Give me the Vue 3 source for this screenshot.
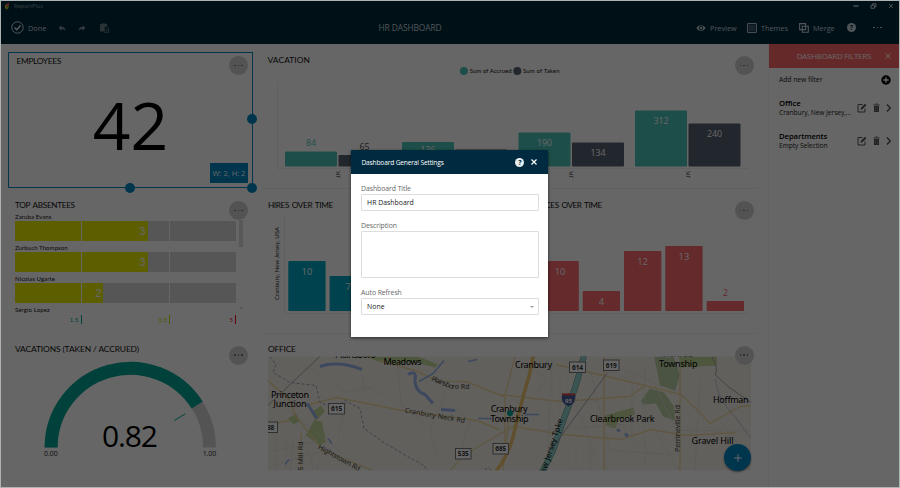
<script setup>
const accrued = [
  { x: 285, y: 151.5, v: 84, ly: 146, out: true },
  { x: 402, y: 142, v: 136, ly: 153 },
  { x: 518.5, y: 132.5, v: 190, ly: 145.5 },
  { x: 635, y: 110.5, v: 312, ly: 124 },
]
const taken = [
  { x: 338.5, y: 155, v: 65, ly: 149.5, out: true },
  { x: 455, y: 149.5, v: '', ly: 160 },
  { x: 572, y: 142.5, v: 134, ly: 156 },
  { x: 688.5, y: 123.5, v: 240, ly: 136.5 },
]
const hires = [
  { x: 288.3, y: 261, v: 10, ly: 275 },
  { x: 329.6, y: 276, v: 7, ly: 290 },
]
const absences = [
  { x: 541.5, y: 261, v: 10, ly: 275 },
  { x: 582.7, y: 291, v: 4, ly: 305 },
  { x: 624, y: 251, v: 12, ly: 265 },
  { x: 665.3, y: 246, v: 13, ly: 260 },
  { x: 706.7, y: 301, v: 2, ly: 295.5, out: true },
]
const people = [
  { name: 'Zaruba Evans', v: 3, w: 60 },
  { name: 'Zurbuch Thompson', v: 3, w: 60 },
  { name: 'Nicolas Ugarte', v: 2, w: 40 },
]
const filters = [
  { name: 'Office', value: 'Cranbury, New Jersey,...' },
  { name: 'Departments', value: 'Empty Selection' },
]
const shields = [
  { x: 328.6, y: 403, w: 16, t: '615' },
  { x: 260, y: 421.5, w: 17.5, t: '638' },
  { x: 455.5, y: 448, w: 15.5, t: '535' },
  { x: 493, y: 443, w: 15.5, t: '685' },
  { x: 569.5, y: 361.5, w: 16, t: '614' },
  { x: 603.5, y: 359.5, w: 15.5, t: '619' },
]
</script>

<template>
  <div class="app">
    <header class="header">
      <div class="titlebar">
        <svg class="logo" viewBox="0 0 8 9"><path d="M1 4 3 2 3.4 8.4 1.3 7z" fill="#ffb52e" /><path d="M3.1 2 6 .5 5.4 4.5 3.2 5z" fill="#ef5350" /><path d="M3.4 5 5.7 4.6 4.8 8 3 8.6z" fill="#75c044" /></svg>
        <span class="product">ReportPlus</span>
        <svg class="window-controls" viewBox="0 0 44 8" fill="none" stroke="#d5e0e4" stroke-width=".9"><path d="M2.500 4h5" stroke-width="1.300" /><path d="M20 3.300h3.500v3h-3.500zM21.500 3.300v-1.500h3.500v3h-1.500M38 2l3.800 4M41.800 2 38 6" /></svg>
      </div>
      <div class="toolbar">
        <div class="tools">
          <svg class="check" viewBox="0 0 13 13" fill="none" stroke="#e6eef1"><circle cx="6.5" cy="6.500" r="5.700" stroke-width=".9" /><path d="m3.600 6.500 2.100 2.200 3.800-4.200" stroke-width="1.300" /></svg>
          <span class="done">Done</span>
          <svg class="undo" viewBox="0 0 9 8"><path d="M4 .8v2c3 0 4.200 1.500 4.400 4.500C7.300 5.500 6 5 4 5v2L.6 3.900z" fill="#7f949e" /></svg>
          <svg class="redo" viewBox="0 0 9 8"><path d="M5 .8v2C2 2.800.8 4.300.6 7.300 1.700 5.500 3 5 5 5v2l3.400-3.100z" fill="#7f949e" /></svg>
          <svg class="paste" viewBox="0 0 9 10"><path d="M0 1h2l.6-.8h2L5.200 1h2v2H4v5.500H0z" fill="#6a7f89" /><path d="M4.300 3.500h2.500l1.700 1.800v4H4.300z" fill="none" stroke="#6a7f89" stroke-width=".9" /><path d="M5.500 6h2M5.500 7.500h2" stroke="#6a7f89" stroke-width=".7" /></svg>
        </div>
        <div class="heading">HR DASHBOARD</div>
        <div class="actions">
          <svg class="eye" viewBox="0 0 10 8"><path d="M.5 4C2.700.2 7.300.2 9.500 4 7.300 7.800 2.700 7.800.5 4z" fill="#c6d2d7" /><circle cx="5" cy="4" r="2.200" fill="#00293b" /><circle cx="5" cy="4" r="1.200" fill="#c6d2d7" /></svg>
          <span class="preview">Preview</span>
          <svg class="grid-icon" viewBox="0 0 10 10" fill="none" stroke="#c6d2d7"><path d="M.6.6h8.800v8.800H.6z" /><path d="M2.300 3h5.500M2.300 5h5.500M2.300 7h5.500" stroke-dasharray="1.200 .9" stroke-width="1.200" /></svg>
          <span class="themes">Themes</span>
          <svg class="merge-icon" viewBox="0 0 10 10" fill="none" stroke="#c6d2d7"><path d="M.6.6h6v6h-6zM3.300 3.300h6v6h-6z" stroke-width="1.100" /></svg>
          <span class="merge">Merge</span>
          <span class="help">?</span>
          <span class="ellipsis"><i /><i /><i /></span>
        </div>
      </div>
    </header>

    <div class="body">
      <main class="board">
        <section class="card selected">
          <div class="card-head"><h2>EMPLOYEES</h2><span class="more"><i /><i /><i /></span></div>
          <div class="big">42</div>
          <span class="size">W: 2, H: 2</span>
          <b class="handle right" /><b class="handle bottom" /><b class="handle corner" />
        </section>

        <section class="card wide">
          <div class="card-head"><h2 class="t-vac">VACATION</h2><span class="more"><i /><i /><i /></span></div>
          <svg class="plot" viewBox="262 79 494 109">
            <circle cx="463.900" cy="71" r="4" fill="#4cc3b7" /><text x="469.700" y="73.300" class="legend" textLength="42">Sum of Accrued</text>
            <circle cx="517.300" cy="71" r="4" fill="#566070" /><text x="523" y="73.300" class="legend" textLength="36.500">Sum of Taken</text>
            <path d="M277.500 83v85.500H748M262 188.500h496" class="axis" />
            <g v-for="b in accrued" :key="'a' + b.x">
              <rect :x="b.x" :y="b.y" width="52" :height="166.5 - b.y" rx="1" fill="#4cc3b7" />
              <text :x="b.x + 26" :y="b.ly" class="num" :class="{ teal: b.out }">{{ b.v }}</text>
              <text :transform="`translate(${b.x + 54.8} 178) rotate(-90)`" class="tick" textLength="7">JK</text>
            </g>
            <g v-for="b in taken" :key="'t' + b.x">
              <rect :x="b.x" :y="b.y" width="52" :height="166.5 - b.y" rx="1" fill="#566070" />
              <text :x="b.x + 26" :y="b.ly" class="num" :class="{ slate: b.out }">{{ b.v }}</text>
            </g>
          </svg>
        </section>

        <section class="card">
          <div class="card-head"><h2 class="t-top">TOP ABSENTEES</h2><span class="more"><i /><i /><i /></span></div>
          <div class="absentees">
            <div class="people">
              <div v-for="p in people" :key="p.name" class="person">
                <span class="name">{{ p.name }}</span>
                <div class="track"><div class="fill" :style="{ width: p.w + '%' }">{{ p.v }}</div></div>
              </div>
              <span class="name last">Sergio Lopez</span>
              <div class="scale"><span class="s1">1.5</span><span class="s2">3.5</span><span class="s3">5</span></div>
            </div>
            <div class="scroll"><i /><em /></div>
          </div>
        </section>

        <section class="card">
          <div class="card-head"><h2 class="t-hires">HIRES OVER TIME</h2></div>
          <svg class="plot" viewBox="262 224 242 109">
            <path d="M284.500 214v99.500H504M262 333.500h242" class="axis" />
            <text transform="translate(279 300) rotate(-90)" class="region" textLength="73">Cranbury, New Jersey, USA</text>
            <g v-for="b in hires" :key="b.x">
              <rect :x="b.x" :y="b.y" width="37.300" :height="311 - b.y" rx="1" fill="#00a9c2" />
              <text :x="b.x + 18.6" :y="b.ly" class="num large">{{ b.v }}</text>
            </g>
          </svg>
        </section>

        <section class="card absence-card">
          <div class="card-head"><h2 class="t-abs">ABSENCES OVER TIME</h2><span class="more"><i /><i /><i /></span></div>
          <svg class="plot" viewBox="513 224 243 109">
            <path d="M540 313.500h208M513 333.500h244" class="axis" />
            <g v-for="b in absences" :key="b.x">
              <rect :x="b.x" :y="b.y" width="37.300" :height="311 - b.y" rx="1" fill="#fd6a6c" />
              <text :x="b.x + 18.6" :y="b.ly" class="num large" :class="{ red: b.out }">{{ b.v }}</text>
            </g>
          </svg>
        </section>

        <section class="card">
          <div class="card-head"><h2 class="t-gauge">VACATIONS (TAKEN / ACCRUED)</h2><span class="more"><i /><i /><i /></span></div>
          <svg class="plot" viewBox="8 368.500 245 109">
            <path d="M51.100 447a79.200 79.200 0 0 1 158.400 0" fill="none" stroke="#d3d3d3" stroke-width="13" />
            <path d="M51.100 447A79.200 79.200 0 0 1 197.200 404.600" fill="none" stroke="#00a693" stroke-width="13" />
            <path d="m174.300 420 11-6.700" stroke="#00a693" stroke-width="1" />
            <text x="102" y="446.500" class="ratio" textLength="56">0.82</text>
            <text x="44" y="455.500" class="limit" textLength="13.700">0.00</text>
            <text x="202.700" y="455.500" class="limit" textLength="13.500">1.00</text>
          </svg>
        </section>

        <section class="card wide">
          <div class="card-head"><h2 class="t-office">OFFICE</h2><span class="more"><i /><i /><i /></span></div>
          <svg class="plot" viewBox="262 368.500 494 109">
            <defs><clipPath id="map-area"><path d="M268 356h483v114H268z" /></clipPath></defs>
            <g clip-path="url(#map-area)">
              <path d="M268 356h483v114H268z" fill="#f2efe8" />
              <g fill="#c3d79a">
                <path d="m303 440 11-20 8 1 4 20-6 4-14-10zM288 418l8-5 4 7-6 4zM311 412l10-7 4 6-9 9zM364 356h54l20 8-3 3-19-5-28 2z" />
                <path d="M679 356h38v9l-37 2zM605 415l28-8 2 7-16 5-4 9-9-3z" />
              </g>
              <g fill="#bcd3a6"><path d="m654 356 20 1 6 18-5 15-15-5zM641 400l9-12 14 4 10 14 1 14-12-4-7-13-13 1z" /></g>
              <g class="minor">
                <path d="M268 452l50-12M270 466l60-18M276 430v40M286 438v32M294 436l-4 34M308 448l6 22M330 430l-14 40M346 402l-8 35M398 366l3 38 22 18M445 395l-15 34 8 30M470 420l-10 32M560 370v45M590 370l20 80M632 376v70M655 430l25 40M700 380l-5 90M720 420l30 40M612 365l40 15 20 40M608 370l25 10M612 450l60 4M625 430l35 30M645 365v100M552 360l-5 100M570 390l25 65M680 430h70M330 380l15 12 30-6M360 385l22 8M362 375l5 20" />
                <path d="M526 365l20 12-8 14M543 400h55M536 430l90-6M576 443v27M590 438v32M606 434v36M440 385l40 50M300 362l20 13M275 400l70 55" />
              </g>
              <g class="road">
                <path d="M268 380l22 20 5 15 28 35 50 20M290 420l-22 4M301 433v37M305 405l32-8 70 14 70 9 22 9M380 360l38 11 20 10h28l38 15" />
                <path d="M450 470q12-15 35-28l28-16 50 8 58 5 30-10 35 6 50-3M503 470l7-60M604 356v114M680 367v103M556 364l85 20 40 10 19 18 10 11 30-17 11-1M500 394l60 7 70-5 16-12M505 460v-65l10-39" />
              </g>
              <path d="M534 350q-3 22-10 43-7 26-11 44-6 20-17 34" class="avenue" />
              <path d="M585 350q-8 36-20 65l-12 35-11 22" fill="none" stroke="#5c8f8a" stroke-width="6" />
              <path d="M585 350q-8 36-20 65l-12 35-11 22" fill="none" stroke="#8fd3ca" stroke-width="5" />
              <path d="M326 350 268 405M607 373l-55 75M712 356q7 14 3 18l13 12 23 16" class="rail" />
              <path d="M715 378q3 22 20 38l16 22" fill="none" stroke="#b9bdd6" stroke-width=".8" />
              <path d="M270 356l6 8-3 8 17 10 26 3 4 17 15 6 10-8 15 8 4 20 20 14 20 12 20 11 10 14 26-4 12 3 16-11 12 10" class="border" />
              <g class="water">
                <path d="M320 366q18-6 42 3M408 374q9-5 7 5 0 12 10 15l8 9M441 409l14 1M307 403l10 15M617 429l3 2M625 433l3 3" />
                <path d="M419 381l14-8 11-13M328 438l4 5M285 464l4-5M478 418h14M468 361l9-2M525 414h14" class="stream" />
              </g>
              <g class="place">
                <text x="335" y="357" textLength="41">Plainsboro</text><text x="383.500" y="364.500" textLength="38">Meadows</text>
                <text><tspan x="271" y="397" textLength="38">Princeton</tspan><tspan x="273.500" y="406.500" textLength="33">Junction</tspan></text>
                <text x="515" y="367.500" textLength="37">Cranbury</text>
                <text><tspan x="490.700" y="411.500" textLength="37">Cranbury</tspan><tspan x="490.500" y="421.200" textLength="38">Township</tspan></text>
                <text x="590" y="421" textLength="64.500">Clearbrook Park</text>
                <text><tspan x="661" y="356.500" textLength="32">Monroe</tspan><tspan x="659" y="366" textLength="38.500">Township</tspan></text>
                <text x="713" y="402" textLength="35.500">Hoffman</text><text x="691.500" y="443.500" textLength="42">Gravel Hill</text>
              </g>
              <g class="street">
                <text transform="translate(431 380) rotate(22)" textLength="23">Plainsbo</text><text x="452" y="388.500" textLength="17.500">ro Rd</text>
                <text transform="translate(404.500 412) rotate(10)" textLength="61">Cranbury Neck Rd</text>
                <text transform="translate(317.500 448) rotate(29)" textLength="47">Hightstown Rd</text>
                <text transform="translate(302.500 470) rotate(-90)" textLength="29">S Mill Rd</text>
                <text transform="translate(680 451.500) rotate(-90)" textLength="47">Perrineville Rd</text>
              </g>
              <text transform="translate(543.500 479) rotate(-72)" class="pike" textLength="63">New Jersey Tpke</text>
              <g v-for="s in shields" :key="s.t">
                <rect :x="s.x" :y="s.y" :width="s.w" height="10.500" fill="#fff" stroke="#777" stroke-width="1" />
                <text :x="s.x + s.w / 2" :y="s.y + 7.7" class="route">{{ s.t }}</text>
              </g>
              <path d="M562 394h13q2 8-6.500 12-8.500-4-6.500-12z" fill="#465b9b" /><path d="M562 392.500q3 1 6.500 0 3.500 1 6.500 0v2.500h-13z" fill="#d94a4a" /><text x="568.500" y="402.500" class="interstate">95</text>
              <circle cx="510" cy="412.700" r="3" fill="#00a693" />
            </g>
          </svg>
        </section>
        <span class="add-widget"><svg viewBox="0 0 8 8"><path d="M4 .2v7.600M.2 4h7.600" stroke="#fff" stroke-width="1" /></svg></span>
      </main>

      <aside class="sidebar">
        <div class="side-head"><span>DASHBOARD FILTERS</span><svg viewBox="0 0 8 8"><path d="m1.500 1.500 5 5M6.500 1.500l-5 5" stroke="#fff" /></svg></div>
        <div class="add"><span>Add new filter</span><svg viewBox="0 0 10 10"><circle cx="5" cy="5" r="4.700" /><path d="M5 2.300v5.400M2.300 5h5.400" stroke="#fff" stroke-width="1.300" /></svg></div>
        <div v-for="f in filters" :key="f.name" class="filter">
          <div class="filter-text"><strong>{{ f.name }}</strong><span>{{ f.value }}</span></div>
          <svg class="filter-icons" viewBox="0 0 36 10" fill="none" stroke="#444">
            <path d="M5.500 1.500H1v7.500h7V5.500" stroke-width=".9" /><path d="m3.500 6.700.5-2L8 .8l1.400 1.400-4 4z" fill="#555" stroke="none" />
            <path d="M17 3h5v6h-5z" fill="#555" stroke="none" /><path d="M16.300 2h6.400M18.400 1h2.300" stroke-width=".8" /><path d="M18.600 3.800v4.400M20.500 3.800v4.400" stroke="#999" stroke-width=".6" />
            <path d="m30 1.500 3.300 3.500L30 8.500" stroke-width="1.200" />
          </svg>
        </div>
      </aside>
    </div>

    <div class="overlay">
      <div class="dialog">
        <div class="dialog-head">
          <span class="dialog-title">Dashboard General Settings</span>
          <span class="help-light">?</span>
          <svg class="close" viewBox="0 0 8 8"><path d="m1.500 1.500 5 5M6.500 1.500l-5 5" stroke="#fff" stroke-width="1.200" /></svg>
        </div>
        <div class="form">
          <label>Dashboard Title</label>
          <div class="field">HR Dashboard</div>
          <label>Description</label>
          <div class="field area" />
          <label>Auto Refresh</label>
          <div class="field select">None<i /></div>
        </div>
      </div>
    </div>
  </div>
</template>

<style>
body { margin: 0; overflow: hidden; }
</style>

<style scoped>
* { box-sizing: border-box; }
.app { position: relative; width: 900px; height: 488px; padding: 1px; display: flex; flex-direction: column; background: #aeb4b4; font-family: "Open Sans", "Noto Sans", sans-serif; color: #222; }
.header { height: 43px; background: #00293b; color: #c6d2d7; flex: none; }
.titlebar { height: 10px; display: flex; align-items: center; padding: 0 4px 0 3px; }
.logo { width: 7px; height: 8px; }
.product { font-size: 5.700px; margin-left: 3px; color: #8ea2ac; }
.window-controls { width: 44px; height: 8px; margin-left: auto; }
.toolbar { height: 33px; display: grid; grid-template-columns: 300px 1fr 300px; align-items: center; font-size: 7.300px; }
.tools, .actions { display: flex; align-items: center; }
.tools { padding-left: 10px; }
.check { width: 13px; height: 13px; }
.done { margin-left: 4px; width: 30px; }
.undo, .redo { width: 8px; height: 8px; }
.redo { margin-left: 12px; }
.paste { width: 9px; height: 10px; margin-left: 14px; }
.heading { text-align: center; font-size: 8.400px; letter-spacing: -.1px; padding-right: 80px; }
.actions { padding-left: 97px; }
.eye { width: 10px; height: 8px; }
.preview { width: 37px; margin-left: 4px; }
.grid-icon, .merge-icon { width: 10px; height: 10px; }
.themes { width: 38px; margin-left: 4px; }
.merge { width: 34px; margin-left: 4px; }
.help, .help-light { width: 9px; height: 9px; border-radius: 50%; background: #c6d2d7; color: #00293b; display: flex; align-items: center; justify-content: center; font-size: 7px; font-weight: 700; }
.ellipsis { display: flex; gap: 2px; margin-left: 17px; }
.ellipsis i { width: 1.500px; height: 1.500px; border-radius: 50%; background: #e0e8ea; }

.body { flex: 1; display: flex; min-height: 0; background: #fff; }
.board { position: relative; width: 768px; padding: 7px 12px 0 7px; display: grid; grid-template-columns: 245px 242px 243px; grid-template-rows: repeat(3, 137px); column-gap: 9px; row-gap: 7.800px; background: #fff; border-right: 1px dotted #eee; }
.card { position: relative; display: flex; flex-direction: column; min-width: 0; box-shadow: 0 0 1px #eee; }
.wide { grid-column: span 2; }
.card-head { height: 28px; flex: none; display: flex; justify-content: space-between; padding: 5px 5px 0 6px; }
.wide .card-head, .absence-card .card-head { padding-right: 2.500px; }
h2 { margin: -1px 0 0; font: 400 8.400px/10px Lato, sans-serif; color: #111; white-space: nowrap; letter-spacing: .1px; }
.t-top { margin-left: 1px; font-size: 8.200px; letter-spacing: -.32px; word-spacing: 1.200px; }
.t-hires { font-size: 8.200px; letter-spacing: -.38px; word-spacing: 1.200px; }
.t-abs { margin-left: 2px; font-size: 8.200px; letter-spacing: -.4px; word-spacing: 1px; }
.t-gauge { margin-left: 1px; margin-top: -2px; letter-spacing: -.1px; }
.t-office { margin-top: -2px; letter-spacing: -.2px; }
.t-vac { margin-left: -.5px; }
.more { width: 19px; height: 19px; border-radius: 50%; background: #d0d0d0; display: flex; align-items: center; justify-content: center; gap: 2px; flex: none; position: relative; z-index: 2; }
.more i { width: 1.500px; height: 1.500px; border-radius: 50%; background: #666; }
.plot { display: block; width: 100%; height: 109px; overflow: visible; }
.axis { fill: none; stroke: #f0f0f0; stroke-width: 1; }
.selected { border: 1.500px solid #0086c4; margin-top: 1px; }
.selected .card-head { padding: 3px 4px 0 7.500px; height: 26px; }
.selected h2 { margin-top: 0; letter-spacing: -.35px; }
.big { text-align: center; font-size: 66px; line-height: 90px; color: #000; }
.size { position: absolute; right: 4px; bottom: 4px; width: 38px; height: 20px; background: #0086c4; color: #fff; font-size: 7.500px; display: flex; align-items: center; justify-content: center; white-space: nowrap; }
.handle { position: absolute; width: 10px; height: 10px; border-radius: 50%; background: #0086c4; }
.handle.right { right: -5px; top: 61px; }
.handle.bottom { left: 116px; bottom: -5.500px; }
.handle.corner { right: -5px; bottom: -5.500px; }
.legend { font: 6px Lato, sans-serif; fill: #111; }
.num { font-size: 8.800px; text-anchor: middle; fill: #fff; }
.num.large { font-size: 9.300px; }
.num.teal { fill: #4cc3b7; }
.num.slate { fill: #444; }
.num.red { fill: #fd6a6c; }
.tick { font: 6px Lato, sans-serif; fill: #222; }
.region { font: 6px Lato, sans-serif; fill: #222; }

.absentees { display: flex; padding-left: 7px; margin-top: -11.500px; }
.people { width: 221px; }
.name { display: block; height: 9px; font: 6px/9px Lato, sans-serif; letter-spacing: .1px; color: #111; }
.person { height: 31px; }
.track { height: 20px; background: #d7d7d7; position: relative; }
.track::before, .track::after { content: ""; position: absolute; top: 0; bottom: 0; width: 1px; background: #fff; z-index: 1; }
.track::before { left: 29.800%; }
.track::after { left: 69.800%; }
.fill { height: 20px; background: #e6ea00; color: #fff; text-align: right; padding-right: 2px; font: 500 11px/20px Lato, sans-serif; }
.last { height: 9px; }
.scale { display: grid; grid-template-columns: 66.500px 88.500px 66px; font: 6.500px/9px Lato, sans-serif; text-align: right; margin-top: 1px; }
.scale span { padding-right: 2px; border-right: 1px solid; height: 9px; }
.s1 { color: #00a693; } .s2 { color: #d3d800; } .s3 { color: #e8102a; }
.scroll { width: 5px; margin-left: 2.500px; padding-top: 8px; display: flex; flex-direction: column; gap: 60px; }
.scroll i { width: 4px; height: 27px; background: #ddd; }
.scroll em { border: 2px solid transparent; border-top-color: #ccc; width: 0; }
.ratio { font-size: 30px; fill: #000; }
.limit { font-size: 7px; fill: #222; }

.minor { fill: none; stroke: #e2dfd9; stroke-width: .6; }
.road { fill: none; stroke: #f0d9a3; stroke-width: 1.400; }
.avenue { fill: none; stroke: #edc66e; stroke-width: 3.500; }
.rail { fill: none; stroke: #98969a; stroke-width: .8; }
.border { fill: none; stroke: #a4a1b4; stroke-width: 1; stroke-dasharray: 3 2; }
.water { fill: none; stroke: #9ab5ec; stroke-width: 3; stroke-linejoin: round; }
.stream { stroke-width: 1.600; }
.place { font: 9px "Noto Sans", sans-serif; fill: #000; }
.street { font: 7px "Noto Sans", sans-serif; fill: #444; }
.pike { font: 8px "Noto Sans", sans-serif; fill: #111; }
.route { font: 700 6.500px "Noto Sans", sans-serif; fill: #333; text-anchor: middle; }
.interstate { font: 700 6px "Noto Sans", sans-serif; fill: #fff; text-anchor: middle; }
.add-widget { position: absolute; left: 723px; top: 400px; width: 27px; height: 27px; border-radius: 50%; background: #0086c4; box-shadow: 0 1px 2px #0007; display: flex; align-items: center; justify-content: center; z-index: 3; }
.add-widget svg { width: 8px; height: 8px; }

.sidebar { width: 130px; background: #fff; }
.side-head { height: 24px; background: #ff6668; color: #fff; display: flex; align-items: center; justify-content: flex-end; font-size: 7.900px; letter-spacing: -.23px; padding-right: 7px; }
.side-head svg { width: 8px; height: 8px; margin-left: 13px; }
.add { height: 23px; display: flex; justify-content: space-between; align-items: center; padding: 0 8px 0 10px; font-size: 6.900px; letter-spacing: -.1px; }
.add svg { width: 10px; height: 10px; }
.filter { height: 33px; display: flex; justify-content: space-between; align-items: center; padding: 1px 6px 0 10px; }
.filter-text { display: flex; flex-direction: column; font-size: 6.700px; line-height: 9.500px; letter-spacing: -.08px; white-space: nowrap; }
.filter-text strong { font-size: 7.700px; font-weight: 600; color: #000; }
.filter-icons { width: 36px; height: 10px; flex: none; margin-top: -1px; }

.overlay { position: absolute; inset: 1px; background: rgba(0, 0, 0, .6); z-index: 10; padding: 149px 0 0 350.400px; }
.dialog { width: 197px; height: 187px; background: #fff; box-shadow: 0 1px 3px #0009; }
.dialog-head { height: 24px; background: #002a3f; color: #fff; display: flex; align-items: center; padding: 0 10px; }
.dialog-title { flex: 1; font-size: 6.600px; letter-spacing: -.15px; white-space: nowrap; }
.help-light { background: #e8eef0; margin-right: 1px; }
.close { width: 8px; height: 8px; margin-left: 5px; }
.form { padding: 8.500px 9.500px 0 9.700px; display: flex; flex-direction: column; }
label { font-size: 6.900px; line-height: 11px; letter-spacing: -.08px; color: #666; }
.field { height: 17px; border: 1px solid #ddd; border-radius: 1px; margin: .5px 0 8.500px; padding-left: 5px; font-size: 6.900px; line-height: 15px; color: #222; }
.area { height: 47px; }
.select { display: flex; justify-content: space-between; }
.select i { border: 2px solid transparent; border-top-color: #999; width: 0; height: 0; margin: 7px 4px 0 0; }
</style>
